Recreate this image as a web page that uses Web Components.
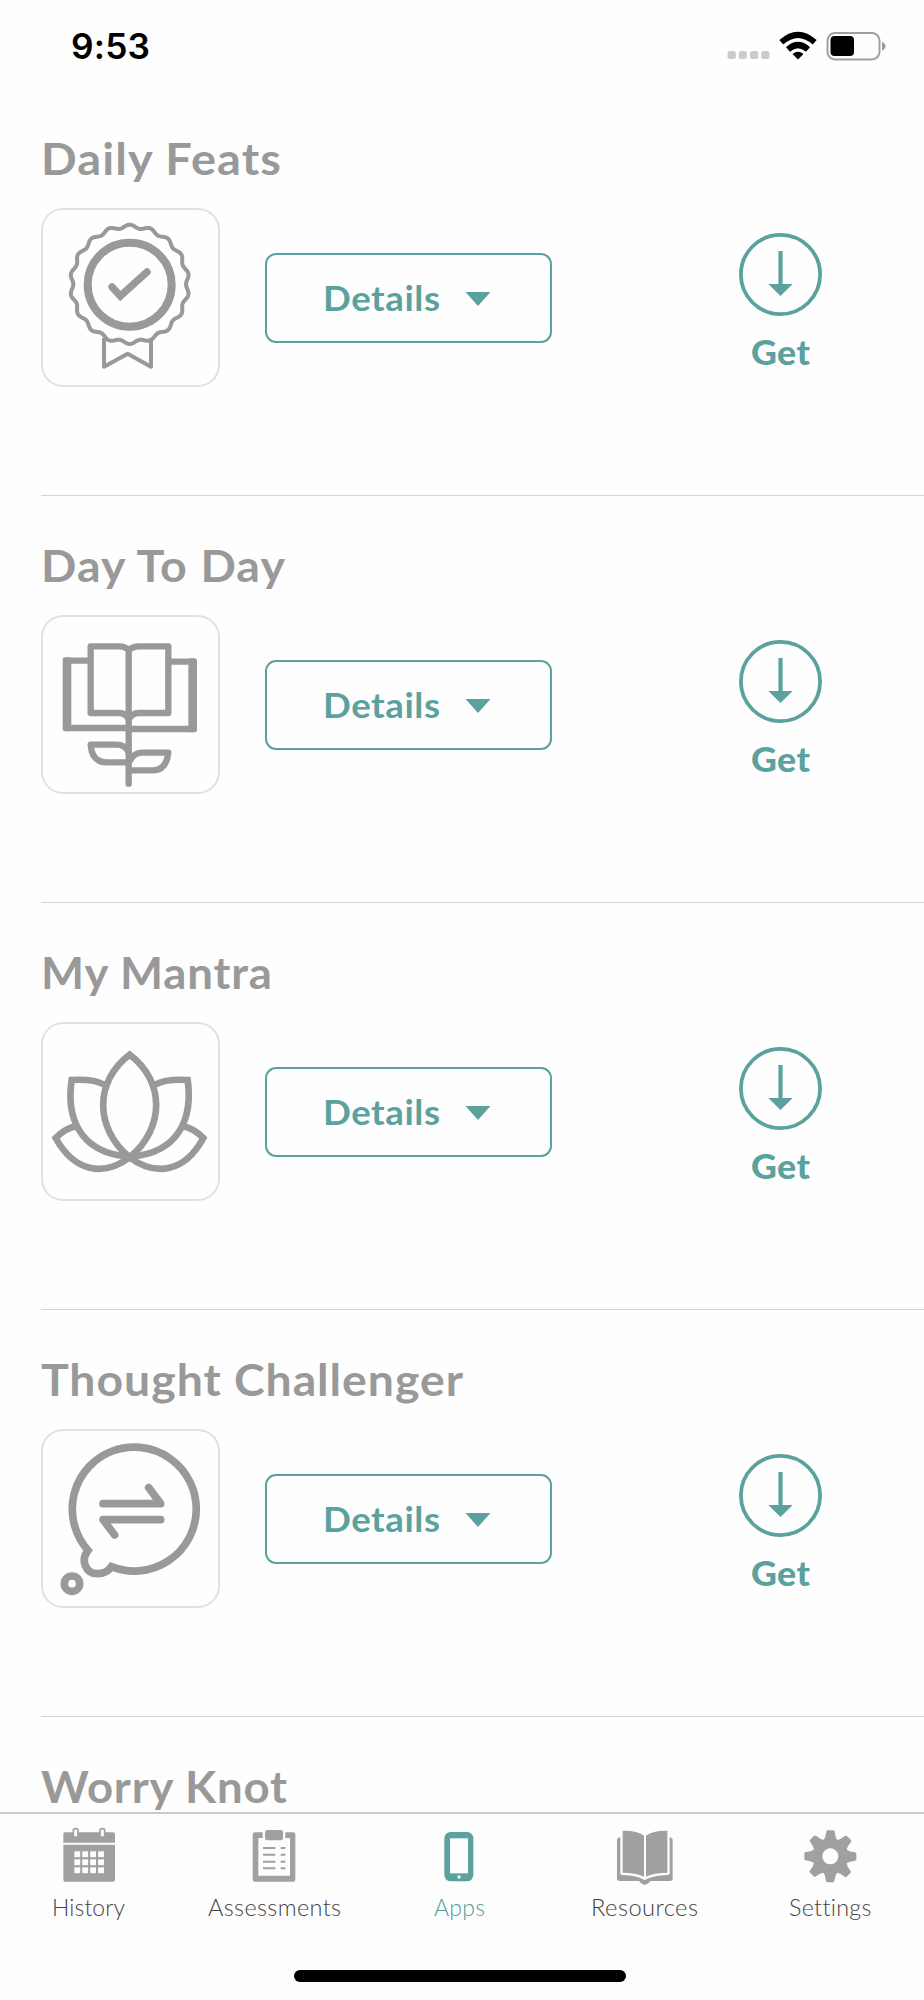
<!DOCTYPE html>
<html lang="en">
<head>
<meta charset="utf-8">
<title>Apps</title>
<style>
html,body{margin:0;padding:0;background:#fefefe}
body{width:924px;height:2000px;overflow:hidden;font-family:Lato,"Open Sans",sans-serif}
</style>
</head>
<body>
<app-screen></app-screen>
<script>
const define = (name, html, setup) => customElements.define(name, class extends HTMLElement {
  connectedCallback() {
    if (this.shadowRoot) return;
    const root = this.attachShadow({ mode: 'open' });
    const t = document.createElement('template');
    t.innerHTML = typeof html === 'function' ? html(this) : html;
    root.append(t.content.cloneNode(true));
    if (setup) setup(this, root);
  }
});

// Text that fills a given width: part wider letters, part wider spacing.
define('fit-text', el => `<style>
:host{display:block;width:${el.getAttribute('w')}px;white-space:nowrap}
span{display:inline-block;transform-origin:0 50%}
</style><span>${el.getAttribute('text')}</span>`, (el, root) => {
  const s = root.querySelector('span'), w = +el.getAttribute('w');
  const natural = s.getBoundingClientRect().width;
  const k = 1 + (w / natural - 1) * 0.6;
  s.style.letterSpacing = (w / k - natural) / (s.textContent.length - 1) + 'px';
  s.style.transform = `scaleX(${k})`;
});

const scallop = (() => {
  let d = '';
  for (let i = 0; i <= 400; i++) {
    const a = i / 400 * Math.PI * 2 - Math.PI / 2;
    const r = 174 + 5 * Math.cos(18 * (a + Math.PI / 2));
    d += (i ? 'L' : 'M') + (331 + r * Math.cos(a)).toFixed(1) + ' ' + (494 + r * Math.sin(a)).toFixed(1);
  }
  return d + 'Z';
})();

const art = {
  ribbon: `<svg viewBox="65 265 537 537"><g fill="none" stroke="#999" stroke-width="12" stroke-linejoin="round">
    <path d="${scallop}"/><path d="M254 655V741L325 702L395 741V655"/>
    <circle cx="331" cy="495" r="126" stroke-width="24"/>
    <path d="M278 502L303 529L383 457" stroke-width="22" stroke-linecap="round" stroke-linejoin="miter"/></g></svg>`,
  plant: `<svg viewBox="64 256 537 537"><g fill="none" stroke="#999" stroke-width="19" stroke-linejoin="round" stroke-linecap="round">
    <path d="M327 762V362Q318 350 298 350H213V550H298Q320 550 327 570M327 362Q338 350 358 350H446V550H358Q336 550 327 570"/>
    <path d="M204 393H142M142 595H327M334 598H519M519 396H455"/>
    <path d="M327 668Q318 645 290 645H213Q216 698 262 698H322M332 692Q342 669 370 669H446Q440 722 400 722H332"/></g>
    <g fill="#999"><rect x="129" y="383" width="26" height="222" rx="7"/><rect x="506" y="386" width="26" height="222" rx="7"/></g></svg>`,
  lotus: `<svg viewBox="65 247 537 537"><g fill="none" stroke="#999" stroke-width="20">
    <path d="M331 345C225 425 225 565 331 653C437 565 437 425 331 345Z"/>
    <path d="M254 435Q222 417 157 421C142 520 170 640 331 651C491 640 519 520 505 421Q440 417 408 435"/>
    <path d="M173 558Q136 566 109 595C165 697 252 712 331 653C410 712 497 697 552 595Q525 566 488 558"/></g></svg>`,
  thought: `<svg viewBox="65 266 537 537"><g fill="none" stroke="#999" stroke-width="23" stroke-linejoin="round">
    <path d="M206 630A186 186 0 1 1 276 679Q262 700 235 700C198 700 183 660 206 630Z" stroke-linejoin="miter"/>
    <path d="M251 490H424L388 442M424 538H251L286 584" stroke-linecap="round"/>
    <circle cx="158" cy="730" r="23"/></g></svg>`
};

define('app-tile', el => `<style>
:host{display:block;width:179px;height:179px;border-radius:22px;box-shadow:inset 0 0 0 2px #e1e1e1}
svg{display:block;width:179px;height:179px}
</style>${art[el.getAttribute('icon')]}`);

define('details-button', `<style>
:host{display:flex;box-sizing:border-box;width:287px;height:90px;border:2px solid #5ba19e;border-radius:11px;
 align-items:center;padding-left:56px;color:#5ba19e;font:700 35px/44px Lato,sans-serif}
fit-text{margin-top:-2px}
svg{display:block;margin-left:25px;margin-top:2px}
</style><fit-text w="117" text="Details"></fit-text>
<svg width="26" height="14" viewBox="0 0 26 14"><path d="M.5 0H25.5L13 14Z" fill="#5ba19e"/></svg>`);

define('get-button', `<style>
:host{display:flex;flex-direction:column;align-items:center;width:83px;color:#5ba19e;font:900 35px/44px Lato,sans-serif}
svg{display:block}
fit-text{margin-top:13px}
</style><svg width="83" height="83" viewBox="0 0 83 83"><circle cx="41.5" cy="41.5" r="39.6" fill="none" stroke="#5ba19e" stroke-width="3.8"/>
<path d="M39.4 18H43.6V51H53.7L41.5 63L29.3 51H39.4Z" fill="#5ba19e"/></svg><fit-text w="59" text="Get"></fit-text>`);

define('app-row', el => `<style>
:host{display:block;box-sizing:border-box;height:407px;margin-left:41px;padding-top:45px;border-bottom:1.5px solid #d4d4d8}
.title{color:#999;font:700 43.5px/48px Lato,sans-serif;height:74px}
.line{display:grid;grid-template-columns:179px 287px 83px;column-gap:45px;align-items:start}
details-button{margin-top:45px}
get-button{margin:25px 0 0 142px}
</style><div class="title"><fit-text w="${el.getAttribute('w')}" text="${el.getAttribute('name')}"></fit-text></div>
${el.hasAttribute('icon') ? `<div class="line"><app-tile icon="${el.getAttribute('icon')}"></app-tile><details-button></details-button><get-button></get-button></div>` : ''}`);

define('status-bar', `<style>
:host{display:flex;box-sizing:border-box;height:89px;padding:24px 38px 0 71px;justify-content:space-between;align-items:flex-start;color:#000;font:600 35px/44px Inter,sans-serif}
svg{display:block}
</style><fit-text w="79" text="9:53"></fit-text>
<svg width="160" height="44" viewBox="726 24 160 44">
<g fill="#cbcbcb"><rect x="727.5" y="51" width="8.3" height="8" rx="2.5"/><rect x="738.7" y="51" width="8.3" height="8" rx="2.5"/><rect x="750" y="51" width="8.3" height="8" rx="2.5"/><rect x="761.2" y="51" width="8.3" height="8" rx="2.5"/></g>
<g fill="none" stroke="#000" stroke-width="6"><path d="M781.3 42.3Q798 27.3 814.7 42.3"/><path d="M788 49.5Q798 40.5 808 49.5"/></g><path d="M792.5 54Q798 49.5 803.5 54L798 59.5Z"/>
<rect x="827.5" y="33" width="52" height="26.5" rx="7.5" fill="none" stroke="#a0a0a0" stroke-width="2"/><rect x="830.5" y="36" width="23.5" height="20" rx="4"/><path d="M882 42Q885.5 43.5 885.5 46.2T882 50.5Z" fill="#999"/></svg>`);

const cells = [0,1,2].map(r => [0,1,2,3].map(c => `<rect x="${222 + c * 23.8}" y="${455 + r * 24}" width="17.5" height="17.5"/>`).join('')).join('');
const lines = [445,465,486,506].map(y => `<path d="M791 ${y}H828M844 ${y}H858"/>`).join('');
const teeth = [0,45,90,135,180,225,270,315].map(a => `<path transform="rotate(${a} 1289 199)" d="M1269 150Q1275 142 1277 125Q1278 121 1281 121H1298Q1301 121 1302 125Q1304 142 1309 150Z"/>`).join('');
const tabArt = {
  history: `<svg viewBox="176 370 180 180" fill="#a0a0a0"><path d="M189 429V404Q189 398 195 398H338Q344 398 344 404V429ZM189 435H344V540Q344 546 338 546H195Q189 546 189 540Z"/><g fill="#fdfdfd" stroke="#a0a0a0" stroke-width="5"><rect x="219" y="387" width="14" height="26" rx="6"/><rect x="299" y="387" width="14" height="26" rx="6"/></g><g fill="#fdfdfd">${cells}</g></svg>`,
  assessments: `<svg viewBox="734 370 180 180" fill="#a0a0a0"><path fill-rule="evenodd" d="M767 398H790V415H777V528H872V415H858V398H881Q888 398 888 404V540Q888 546 881 546H767Q760 546 760 540V404Q760 398 767 398Z"/><rect x="797" y="391" width="54" height="31" rx="7"/><g stroke="#a0a0a0" stroke-width="6">${lines}</g></svg>`,
  apps: `<svg viewBox="86 98 180 180"><rect x="132" y="125" width="87" height="148" rx="19" fill="#5ba19e"/><path d="M149 144H203V249H149Z" fill="#fdfdfd"/><circle cx="176" cy="260" r="5" fill="#fdfdfd"/></svg>`,
  resources: `<svg viewBox="642 98 180 180" overflow="visible" fill="#a0a0a0"><path d="M665 121Q708 120 729 136V259Q705 247 665 247ZM799 121Q756 120 735 136V259Q759 247 799 247Z"/><path d="M658 141V247Q658 254 666 254Q708 255 731 269Q755 255 798 254Q806 254 806 247V141Q815 142 815 150V264Q815 272 807 272H749Q739 283 731 283Q723 283 714 272H656Q648 272 648 264V150Q648 142 658 141Z"/></svg>`,
  settings: `<svg viewBox="1198 99 180 180" fill="#a0a0a0">${teeth}<path fill-rule="evenodd" d="M1289 145a54 54 0 1 0 .1 0ZM1289 175a24 24 0 1 1-.1 0Z"/></svg>`
};
define('tab-item', el => `<style>
:host{display:flex;flex-direction:column;align-items:center;color:${el.hasAttribute('active') ? '#4f9e9a' : '#444'};font:300 22.5px/30px Lato,sans-serif}
svg{display:block;width:60px;height:60px;margin-top:9px}
fit-text{margin-top:10px}
</style>${tabArt[el.getAttribute('icon')]}<fit-text w="${el.getAttribute('w')}" text="${el.getAttribute('label')}"></fit-text>`);

define('tab-bar', `<style>
:host{display:block;box-sizing:border-box;height:188px;border-top:2px solid #cacaca;background:#fdfdfd}
nav{display:grid;grid-template-columns:repeat(5,185.4px);margin-left:-4px;height:156px}
.home{width:332px;height:12px;border-radius:6px;background:#000;margin:0 auto 0 294px}
</style><nav><tab-item icon="history" label="History" w="73"></tab-item><tab-item icon="assessments" label="Assessments" w="133"></tab-item>
<tab-item icon="apps" label="Apps" w="51" active></tab-item><tab-item icon="resources" label="Resources" w="107"></tab-item><tab-item icon="settings" label="Settings" w="82"></tab-item></nav><div class="home"></div>`);

define('app-screen', `<style>
:host{display:grid;grid-template-rows:89px 1723px 188px;width:924px;height:2000px}
main{overflow:hidden}
</style><status-bar></status-bar><main>
<app-row name="Daily Feats" w="240" icon="ribbon"></app-row>
<app-row name="Day To Day" w="244" icon="plant"></app-row>
<app-row name="My Mantra" w="231" icon="lotus"></app-row>
<app-row name="Thought Challenger" w="422" icon="thought"></app-row>
<app-row name="Worry Knot" w="246"></app-row></main><tab-bar></tab-bar>`);
</script>
</body>
</html>
